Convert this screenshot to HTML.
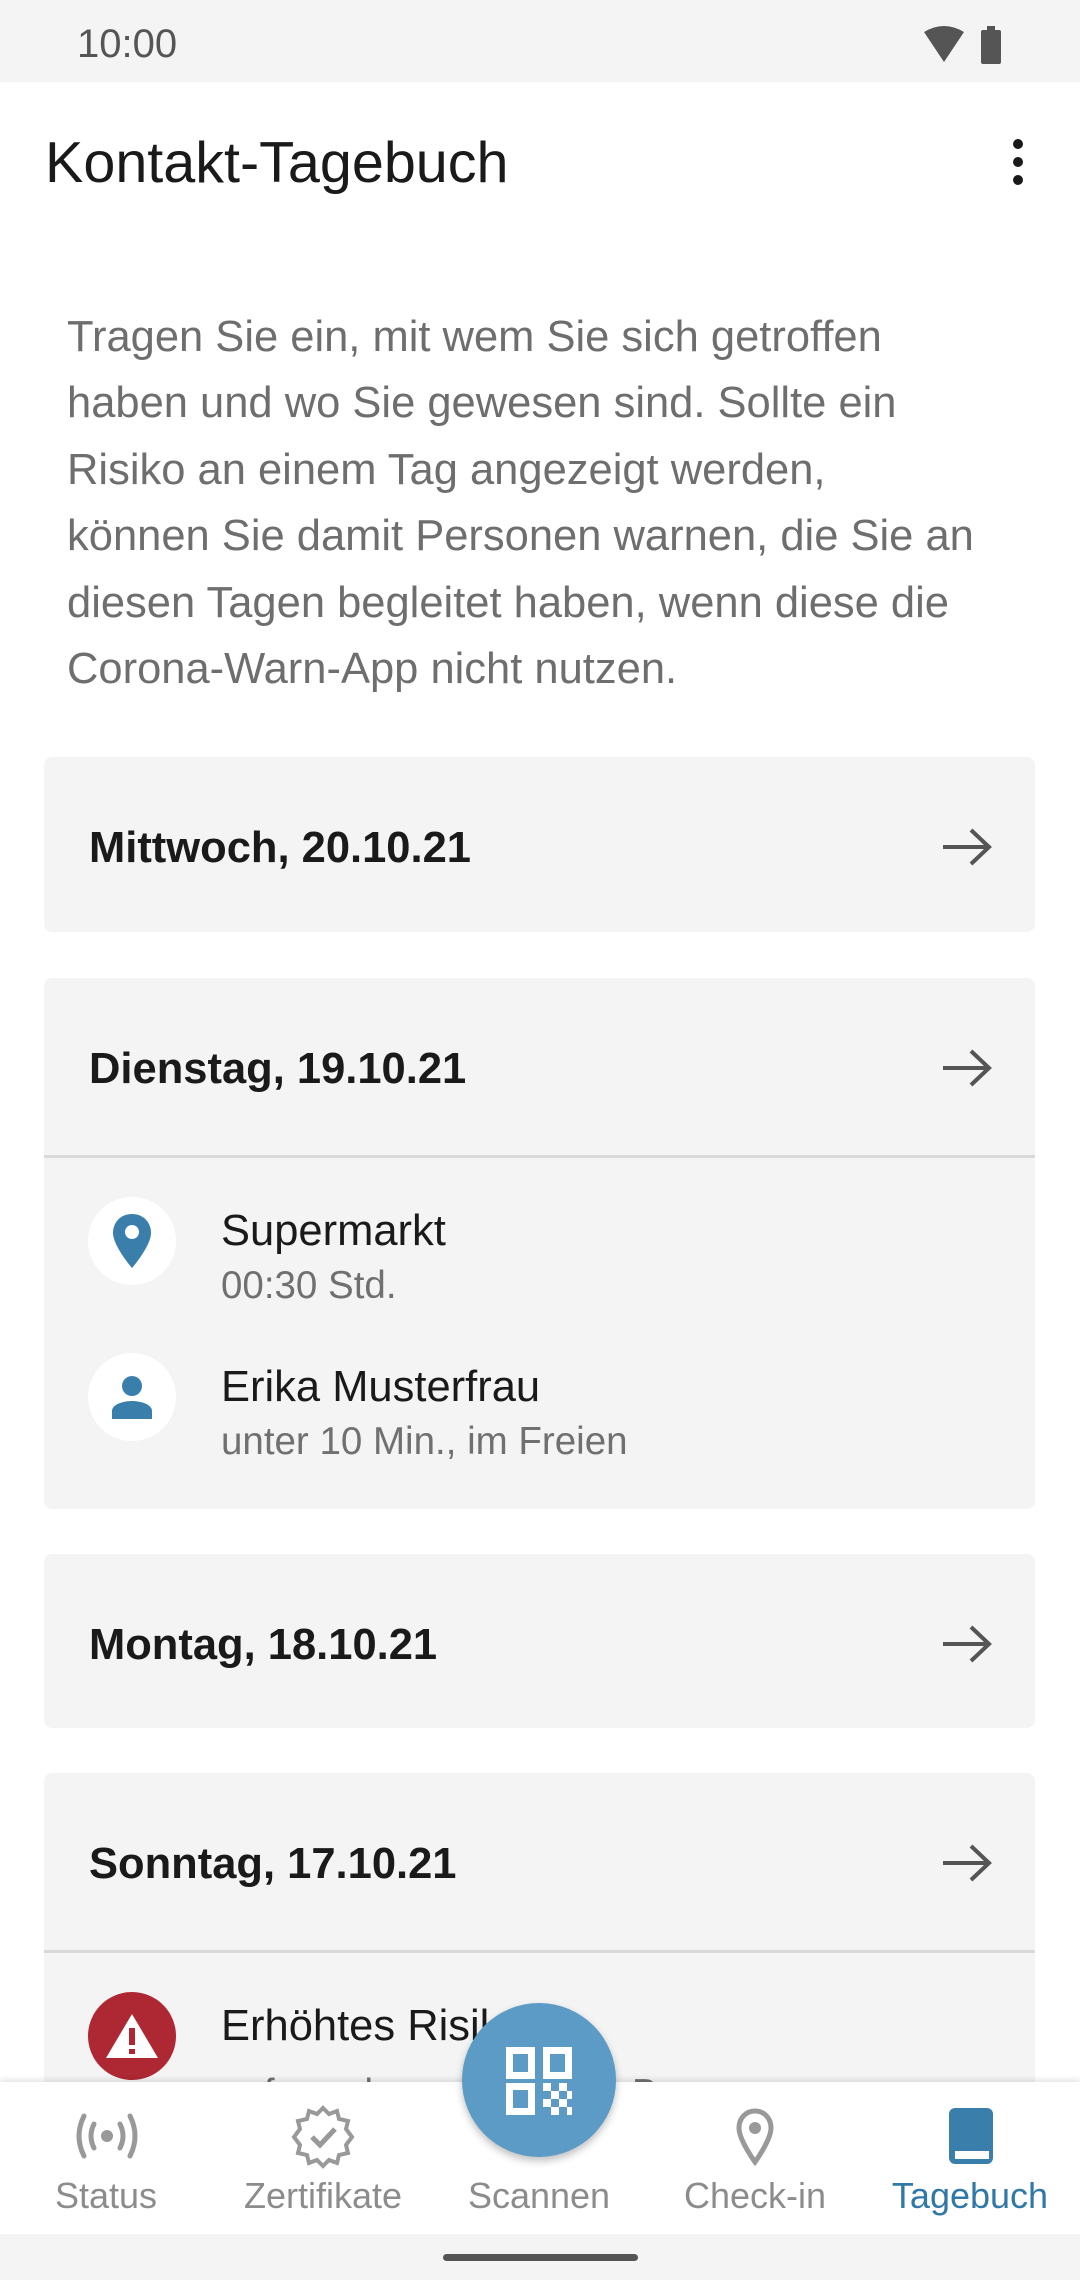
<!DOCTYPE html>
<html><head><meta charset="utf-8"><style>
*{margin:0;padding:0;box-sizing:border-box}
body{width:1080px;height:2280px;position:relative;background:#fff;font-family:"Liberation Sans",sans-serif;overflow:hidden}
.a{position:absolute;white-space:nowrap}
.card{position:absolute;left:44px;width:991px;background:#f4f4f4;border-radius:8px}
.hd{position:absolute;left:45px;font-weight:bold;font-size:43.5px;color:#1a1a1a;line-height:1}
.arr{position:absolute;right:42px}
.div{position:absolute;left:0;right:0;height:3px;background:#d9d9d9}
.ic{position:absolute;left:44px;width:88px;height:88px;border-radius:50%;background:#fff;display:flex;align-items:center;justify-content:center}
.nm{position:absolute;left:177px;font-size:43.5px;color:#1a1a1a;line-height:1}
.sb{position:absolute;left:177px;font-size:38.5px;color:#707070;line-height:1}
.nl{position:absolute;top:2175px;font-size:36px;color:#8c8c8c;transform:translateX(-50%);white-space:nowrap}
</style></head><body>
<div class="a" style="left:0;top:0;width:1080px;height:82px;background:#f4f4f4"></div>
<div class="a" style="left:77px;top:22px;font-size:40px;color:#555">10:00</div>
<svg class="a" style="left:922px;top:24px" width="80" height="40" viewBox="0 0 80 40"><path d="M2 8 Q22 -4 42 8 L22 38 Z" fill="#555"/><rect x="59" y="6" width="20" height="34" rx="2" fill="#555"/><rect x="65" y="2" width="8" height="5" fill="#555"/></svg>
<div class="a" style="left:45px;top:130px;font-size:57.5px;color:#1a1a1a">Kontakt-Tagebuch</div>
<svg class="a" style="left:1008px;top:138px" width="20" height="50"><circle cx="10" cy="6" r="5" fill="#1a1a1a"/><circle cx="10" cy="24" r="5" fill="#1a1a1a"/><circle cx="10" cy="42" r="5" fill="#1a1a1a"/></svg>
<div class="a" style="left:67px;top:304px;font-size:43.5px;line-height:66.4px;color:#6e6e6e">Tragen Sie ein, mit wem Sie sich getroffen<br>haben und wo Sie gewesen sind. Sollte ein<br>Risiko an einem Tag angezeigt werden,<br>können Sie damit Personen warnen, die Sie an<br>diesen Tagen begleitet haben, wenn diese die<br>Corona-Warn-App nicht nutzen.</div>

<svg width="0" height="0" style="position:absolute"><defs><g id="ar"><path d="M2 20 H48 M30 3 L48 20 L30 37" fill="none" stroke="#555" stroke-width="4"/></g></defs></svg>

<div class="card" style="top:757px;height:175px"><div class="hd" style="top:70px">Mittwoch, 20.10.21</div><svg class="arr" style="top:70px" width="52" height="40"><use href="#ar"/></svg></div>

<div class="card" style="top:978px;height:531px">
<div class="hd" style="top:70px">Dienstag, 19.10.21</div><svg class="arr" style="top:70px" width="52" height="40"><use href="#ar"/></svg>
<div class="div" style="top:177px"></div>
<div class="ic" style="top:219px"><svg width="40" height="56" viewBox="0 0 40 56"><path d="M20 1C9 1 1 9 1 20C1 33 20 55 20 55S39 33 39 20C39 9 31 1 20 1Z" fill="#3a7fab"/><circle cx="20" cy="19" r="7" fill="#fff"/></svg></div>
<div class="nm" style="top:232px">Supermarkt</div>
<div class="sb" style="top:289px">00:30 Std.</div>
<div class="ic" style="top:375px"><svg width="40" height="44" viewBox="0 0 40 44"><circle cx="20" cy="11" r="10" fill="#3a7fab"/><path d="M0 44V36C0 29 12 26 20 26S40 29 40 36V44Z" fill="#3a7fab"/></svg></div>
<div class="nm" style="top:388px">Erika Musterfrau</div>
<div class="sb" style="top:445px">unter 10 Min., im Freien</div>
</div>

<div class="card" style="top:1554px;height:174px"><div class="hd" style="top:70px">Montag, 18.10.21</div><svg class="arr" style="top:70px" width="52" height="40"><use href="#ar"/></svg></div>

<div class="card" style="top:1773px;height:400px">
<div class="hd" style="top:70px">Sonntag, 17.10.21</div><svg class="arr" style="top:70px" width="52" height="40"><use href="#ar"/></svg>
<div class="div" style="top:177px"></div>
<div class="ic" style="top:219px;background:#ad2832"><svg width="56" height="48" viewBox="0 0 56 48"><path d="M28 2L54 46H2Z" fill="#fff"/><rect x="25" y="16" width="6" height="17" fill="#ad2832"/><rect x="25" y="37" width="6" height="5" fill="#ad2832"/></svg></div>
<div class="nm" style="top:232px">Erhöhtes Risiko</div>
<div class="sb" style="top:302px">aufgrund von mehreren Begegnungen</div>
</div>

<div class="a" style="left:0;top:2082px;width:1080px;height:152px;background:#fff;box-shadow:0 -2px 6px rgba(0,0,0,.12)"></div>
<div class="a" style="left:462px;top:2003px;width:154px;height:154px;border-radius:50%;background:#5b9bc6;box-shadow:0 4px 8px rgba(0,0,0,.25)"></div>
<svg class="a" style="left:506px;top:2047px" width="66" height="68" viewBox="0 0 66 68"><g fill="none" stroke="#fff" stroke-width="7"><rect x="3.5" y="3.5" width="22" height="25"/><rect x="40.5" y="3.5" width="22" height="25"/><rect x="3.5" y="39.5" width="22" height="25"/></g><g fill="#fff"><rect x="37" y="36" width="8" height="8"/><rect x="53" y="36" width="8" height="8"/><rect x="45" y="44" width="8" height="8"/><rect x="37" y="52" width="8" height="8"/><rect x="53" y="52" width="8" height="8"/><rect x="45" y="60" width="8" height="8"/><rect x="61" y="44" width="5" height="8"/><rect x="61" y="60" width="5" height="8"/></g></svg>
<svg class="a" style="left:72px;top:2112px" width="70" height="48" viewBox="0 0 70 48"><g fill="none" stroke="#999" stroke-width="5" stroke-linecap="round"><path d="M12 4Q2 24 12 44M58 4Q68 24 58 44M22 12Q16 24 22 36M48 12Q54 24 48 36"/></g><circle cx="35" cy="24" r="6" fill="#999"/></svg>
<svg class="a" style="left:290px;top:2105px" width="66" height="64" viewBox="0 0 66 64"><path d="M33 3L39 9L47 6L49 14L58 16L56 24L62 32L56 40L58 48L49 50L47 58L39 55L33 61L27 55L19 58L17 50L8 48L10 40L4 32L10 24L8 16L17 14L19 6L27 9Z" fill="none" stroke="#999" stroke-width="4"/><path d="M22 32L30 40L45 24" fill="none" stroke="#999" stroke-width="5"/></svg>
<svg class="a" style="left:735px;top:2108px" width="40" height="58" viewBox="0 0 40 58"><path d="M20 3C11 3 4 10 4 20C4 32 20 54 20 54S36 32 36 20C36 10 29 3 20 3Z" fill="none" stroke="#999" stroke-width="5"/><circle cx="20" cy="20" r="6" fill="#999"/></svg>
<svg class="a" style="left:949px;top:2108px" width="44" height="56" viewBox="0 0 44 56"><rect x="0" y="0" width="44" height="56" rx="6" fill="#3a7fab"/><rect x="6" y="43" width="34" height="8" fill="#fff"/></svg>
<div class="nl" style="left:106px">Status</div>
<div class="nl" style="left:323px">Zertifikate</div>
<div class="nl" style="left:539px">Scannen</div>
<div class="nl" style="left:755px">Check-in</div>
<div class="nl" style="left:970px;color:#2f78a8">Tagebuch</div>
<div class="a" style="left:0;top:2234px;width:1080px;height:46px;background:#f4f4f4"></div>
<div class="a" style="left:443px;top:2254px;width:195px;height:7px;border-radius:4px;background:#555"></div>
</body></html>
